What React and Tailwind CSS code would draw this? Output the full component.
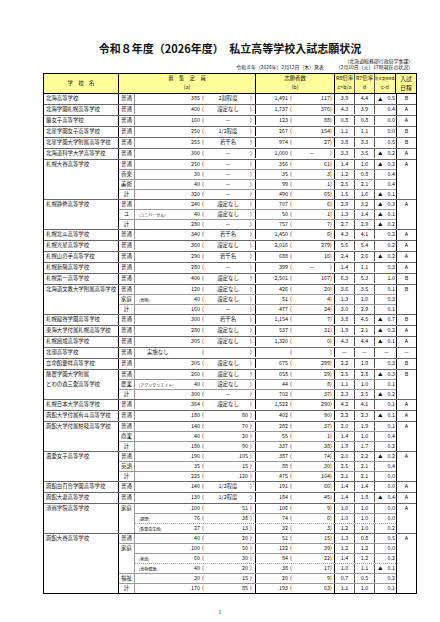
const G = [
  { n: ["北海高等学校"], s: "B", r: [["普通", "", "385", "2割程度", "1,491", "117", "3.9", "4.4", "▲0.5"]] },
  { n: ["北海学園札幌高等学校"], s: "A", r: [["普通", "", "400", "設定なし", "1,737", "376", "4.3", "3.9", "0.4"]] },
  { n: ["藤女子高等学校"], s: "A", r: [["普通", "", "160", "—", "123", "88", "0.8", "0.8", "0.0"]] },
  { n: ["北星学園女子高等学校"], s: "B", r: [["普通", "", "250", "1/2程度", "267", "154", "1.1", "1.1", "0.0"]] },
  { n: ["北星学園大学附属高等学校"], s: "B", r: [["普通", "", "255", "若干名", "974", "27", "3.8", "3.3", "0.5"]] },
  { n: ["北海道科学大学高等学校"], s: "A", r: [["普通", "", "300", "—", "1,000", "—", "3.3", "3.5", "▲0.2"]] },
  {
    n: ["札幌大谷高等学校"], s: "A", r: [
      ["普通", "", "250", "—", "356", "61", "1.4", "1.6", "▲0.2"],
      ["音楽", "", "30", "—", "35", "3", "1.2", "0.8", "0.4"],
      ["美術", "", "40", "—", "99", "1", "2.5", "2.1", "0.4"],
      ["計", "", "320", "—", "490", "65", "1.5", "1.6", "▲0.1"],
    ],
  },
  {
    n: ["札幌静修高等学校"], s: "A", r: [
      ["普通", "", "240", "設定なし", "707", "6", "2.9", "3.2", "▲0.3"],
      ["ユ", "(ユニバーサル)", "40", "設定なし", "50", "1", "1.3", "1.4", "▲0.1"],
      ["計", "", "280", "—", "757", "7", "2.7", "2.9", "▲0.2"],
    ],
  },
  { n: ["札幌北斗高等学校"], s: "A", r: [["普通", "", "340", "若干名", "1,450", "6", "4.3", "4.1", "0.2"]] },
  { n: ["札幌光星高等学校"], s: "A", r: [["普通", "", "360", "設定なし", "2,016", "279", "5.6", "5.4", "0.2"]] },
  { n: ["札幌山の手高等学校"], s: "A", r: [["普通", "", "290", "若干名", "688", "16", "2.4", "2.6", "▲0.2"]] },
  { n: ["札幌新陽高等学校"], s: "A", r: [["普通", "", "280", "—", "399", "—", "1.4", "1.1", "0.3"]] },
  { n: ["札幌第一高等学校"], s: "B", r: [["普通", "", "400", "設定なし", "2,501", "167", "6.3", "5.3", "1.0"]] },
  {
    n: ["北海道文教大学附属高等学校"], s: "B", r: [
      ["普通", "", "120", "設定なし", "426", "20", "3.6", "3.5", "0.1"],
      ["家庭", "(食物)", "40", "設定なし", "51", "4", "1.3", "1.0", "0.3"],
      ["計", "", "160", "—", "477", "24", "3.0", "2.9", "0.1"],
    ],
  },
  { n: ["札幌龍谷学園高等学校"], s: "B", r: [["普通", "", "300", "若干名", "1,154", "7", "3.8", "4.5", "▲0.7"]] },
  { n: ["東海大学付属札幌高等学校"], s: "A", r: [["普通", "", "280", "設定なし", "537", "31", "1.9", "2.1", "▲0.2"]] },
  { n: ["札幌創成高等学校"], s: "A", r: [["普通", "", "305", "設定なし", "1,320", "0", "4.3", "4.4", "▲0.1"]] },
  { n: ["北嶺高等学校"], s: "—", r: [["普通", "実施なし", "", "", "", "", "—", "—", "—"]] },
  { n: ["立命館慶祥高等学校"], s: "B", r: [["普通", "", "305", "設定なし", "675", "299", "2.2", "1.9", "0.3"]] },
  {
    n: ["酪農学園大学附属", "とわの森三愛高等学校"], s: "B", r: [
      ["普通", "", "260", "設定なし", "658", "29", "2.5", "2.8", "▲0.3"],
      ["農業", "(アグリクリエイト)", "40", "設定なし", "44", "8", "1.1", "1.0", "0.1"],
      ["計", "", "300", "—", "702", "37", "2.3", "2.5", "▲0.2"],
    ],
  },
  { n: ["札幌日本大学高等学校"], s: "A", r: [["普通", "", "364", "設定なし", "1,522", "290", "4.2", "4.1", "0.1"]] },
  { n: ["函館大学付属有斗高等学校"], s: "A", r: [["普通", "", "180", "80", "402", "90", "2.2", "2.3", "▲0.1"]] },
  {
    n: ["函館大学付属柏稜高等学校"], s: "A", r: [
      ["普通", "", "140", "70", "282", "37", "2.0", "1.9", "0.1"],
      ["商業", "", "40", "20", "55", "1", "1.4", "1.0", "0.4"],
      ["計", "", "180", "90", "337", "38", "1.9", "1.7", "0.2"],
    ],
  },
  {
    n: ["遺愛女子高等学校"], s: "A", r: [
      ["普通", "", "190", "105", "387", "74", "2.0", "2.2", "▲0.2"],
      ["英語", "", "35", "15", "88", "30", "2.5", "2.1", "0.4"],
      ["計", "", "225", "120", "475", "104", "2.1", "2.1", "0.0"],
    ],
  },
  { n: ["函館白百合学園高等学校"], s: "A", r: [["普通", "", "140", "1/2程度", "191", "66", "1.4", "1.4", "0.0"]] },
  { n: ["函館大妻高等学校"], s: "A", r: [["普通", "", "130", "1/2程度", "184", "45", "1.4", "1.8", "▲0.4"]] },
  {
    n: ["清尚学院高等学校"], s: "A", r: [
      ["家庭", "", "100", "51", "106", "9", "1.0", "1.0", "0.0"],
      ["", "(調理)", "76", "38", "74", "6", "1.0", "1.0", "0.0", "sub"],
      ["", "(製菓衛生師)", "27", "13", "32", "3", "1.2", "1.0", "0.2", "dot"],
    ],
  },
  {
    n: ["函館大谷高等学校"], s: "A", r: [
      ["普通", "", "40", "20", "51", "15", "1.3", "0.8", "0.5"],
      ["家庭", "", "100", "50", "122", "39", "1.2", "1.2", "0.0"],
      ["", "(家政)", "60", "30", "84", "22", "1.4", "1.2", "0.2", "sub"],
      ["", "(食物健康)", "40", "20", "38", "17", "1.0", "1.1", "▲0.1", "dot"],
      ["福祉", "", "30", "15", "20", "9", "0.7", "0.5", "0.2"],
      ["計", "", "170", "85", "193", "63", "1.1", "1.0", "0.1"],
    ],
  },
];

function Row({ r, first, short }) {
  const [c, l, q, qn, a, an, r1, r2, d, k] = r;
  const numNote = /^\d+$/.test(qn);
  const tri = d.startsWith("▲");
  const dv = tri ? d.slice(1) : d;
  const courseLine = first || k ? "" : "border-t border-t-[#999]";
  const restLine = first
    ? ""
    : k === "dot"
    ? "border-t border-dotted border-t-[#999]"
    : "border-t border-t-[#999]";

  return (
    <div className={`flex ${short ? "h-[9px]" : "h-[10px]"}`}>
      <div className={`w-[16px] h-full flex items-center justify-center border-r border-r-[#999] ${courseLine}`}>
        {c}
      </div>
      <div className={`flex h-full ${restLine}`}>
        <div className="w-[121px] h-full flex items-center border-r border-r-black">
          <div
            className={`w-[37px] whitespace-nowrap ${l === "実施なし" ? "pl-[12px]" : "pl-[4px] text-[4px]"} ${
              l.length > 8 ? "text-[3.3px]" : ""
            }`}
          >
            {l}
          </div>
          <div className="w-[28px] text-right">{q}</div>
          <div className="w-[6px] text-center">(</div>
          <div className={`w-[44px] ${numNote ? "text-right pr-[2px]" : "text-center"}`}>{qn}</div>
          <div className="w-[5px]">)</div>
        </div>
        <div className="w-[79px] h-full flex items-center border-r border-r-black">
          <div className="w-[32px] text-right">{a}</div>
          <div className="w-[6px] text-center">(</div>
          <div className={`w-[36px] ${an === "—" ? "text-center" : "text-right"}`}>{an}</div>
          <div className="w-[4px]">)</div>
        </div>
        <div className="w-[20px] h-full flex items-center justify-center border-r border-r-[#555]">{r1}</div>
        <div className="w-[20px] h-full flex items-center justify-center border-r border-r-[#555]">{r2}</div>
        <div
          className={`w-[21px] h-full flex items-center pl-[3px] pr-[1px] ${
            d === "—" ? "justify-center" : "justify-between"
          }`}
        >
          {d === "—" ? (
            d
          ) : (
            <>
              <span className="text-[4.5px]">{tri ? "▲" : ""}</span>
              <span>{dv}</span>
            </>
          )}
        </div>
      </div>
    </div>
  );
}

function Header() {
  return (
    <div className="flex h-[20px] bg-[#ffff99] border-b border-b-black">
      <div className="w-[75px] flex items-center justify-center border-r border-r-black">学　校　名</div>
      <div className="w-[137px] flex flex-col items-center justify-center border-r border-r-black">
        <div className="h-[9px] flex items-center">募　集　定　員</div>
        <div className="h-[9px] flex items-center">(a)</div>
      </div>
      <div className="w-[79px] flex flex-col items-center justify-center border-r border-r-black">
        <div className="h-[9px] flex items-center">志願者数</div>
        <div className="h-[9px] flex items-center">(b)</div>
      </div>
      <div className="w-[20px] flex flex-col items-center justify-center border-r border-r-[#555]">
        <div className="h-[9px] flex items-center whitespace-nowrap">R8倍率</div>
        <div className="h-[9px] flex items-center">c=b/a</div>
      </div>
      <div className="w-[20px] flex flex-col items-center justify-center border-r border-r-[#555]">
        <div className="h-[9px] flex items-center whitespace-nowrap">R7倍率</div>
        <div className="h-[9px] flex items-center">d</div>
      </div>
      <div className="w-[21px] flex flex-col items-center justify-center border-r border-r-black">
        <div className="h-[9px] flex items-center whitespace-nowrap text-[3.3px]">前年度倍率差</div>
        <div className="h-[9px] flex items-center">c-d</div>
      </div>
      <div className="w-[20px] flex flex-col items-center justify-center">
        <div className="h-[9px] flex items-center text-[5.8px]">入試</div>
        <div className="h-[9px] flex items-center text-[5.8px]">日程</div>
      </div>
    </div>
  );
}

export default function App() {
  return (
    <div className="w-[440px] h-[622px] bg-white text-[#111] font-['Noto_Sans_CJK_JP','Noto_Sans',sans-serif] leading-none">
      <div className="ml-[43px] w-[374px] pt-[42px]">
        <div className="text-center text-[11px] leading-[12px] font-bold">
          令和８年度（2026年度）　私立高等学校入試志願状況
        </div>
        <div className="mt-[4px] pr-[4px] text-right text-[4.9px] leading-[6px]">（北海道総務部行政局学事課）</div>
        <div className="flex justify-end gap-[12px] pr-[4px] text-[4.9px] leading-[6px]">
          <span>令和８年（2026年）2月12日（木）発表</span>
          <span>（2月10日（火）17時現在の状況）</span>
        </div>
        <div className="mt-[3px] border border-black text-[5.4px]">
          <Header />
          {G.map((g, gi) => (
            <div key={g.n[0]} className={`flex ${gi ? "border-t border-t-[#666]" : ""}`}>
              <div className="w-[75px] shrink-0 border-r border-r-black pl-[2px] whitespace-nowrap">
                {g.n.map((x) => (
                  <div key={x} className="h-[10px] flex items-center">
                    {x}
                  </div>
                ))}
              </div>
              <div className="w-[277px] shrink-0">
                {g.r.map((r, i) => (
                  <Row key={i} r={r} first={i === 0} short={i === 0 && gi > 0} />
                ))}
              </div>
              <div className="w-[20px] shrink-0 border-l border-l-black">
                <div className="h-[9px] flex items-center justify-center">{g.s}</div>
              </div>
            </div>
          ))}
        </div>
      </div>
      <div className="w-[440px] mt-[15px] text-center text-[5px] leading-[6px]">1</div>
    </div>
  );
}
